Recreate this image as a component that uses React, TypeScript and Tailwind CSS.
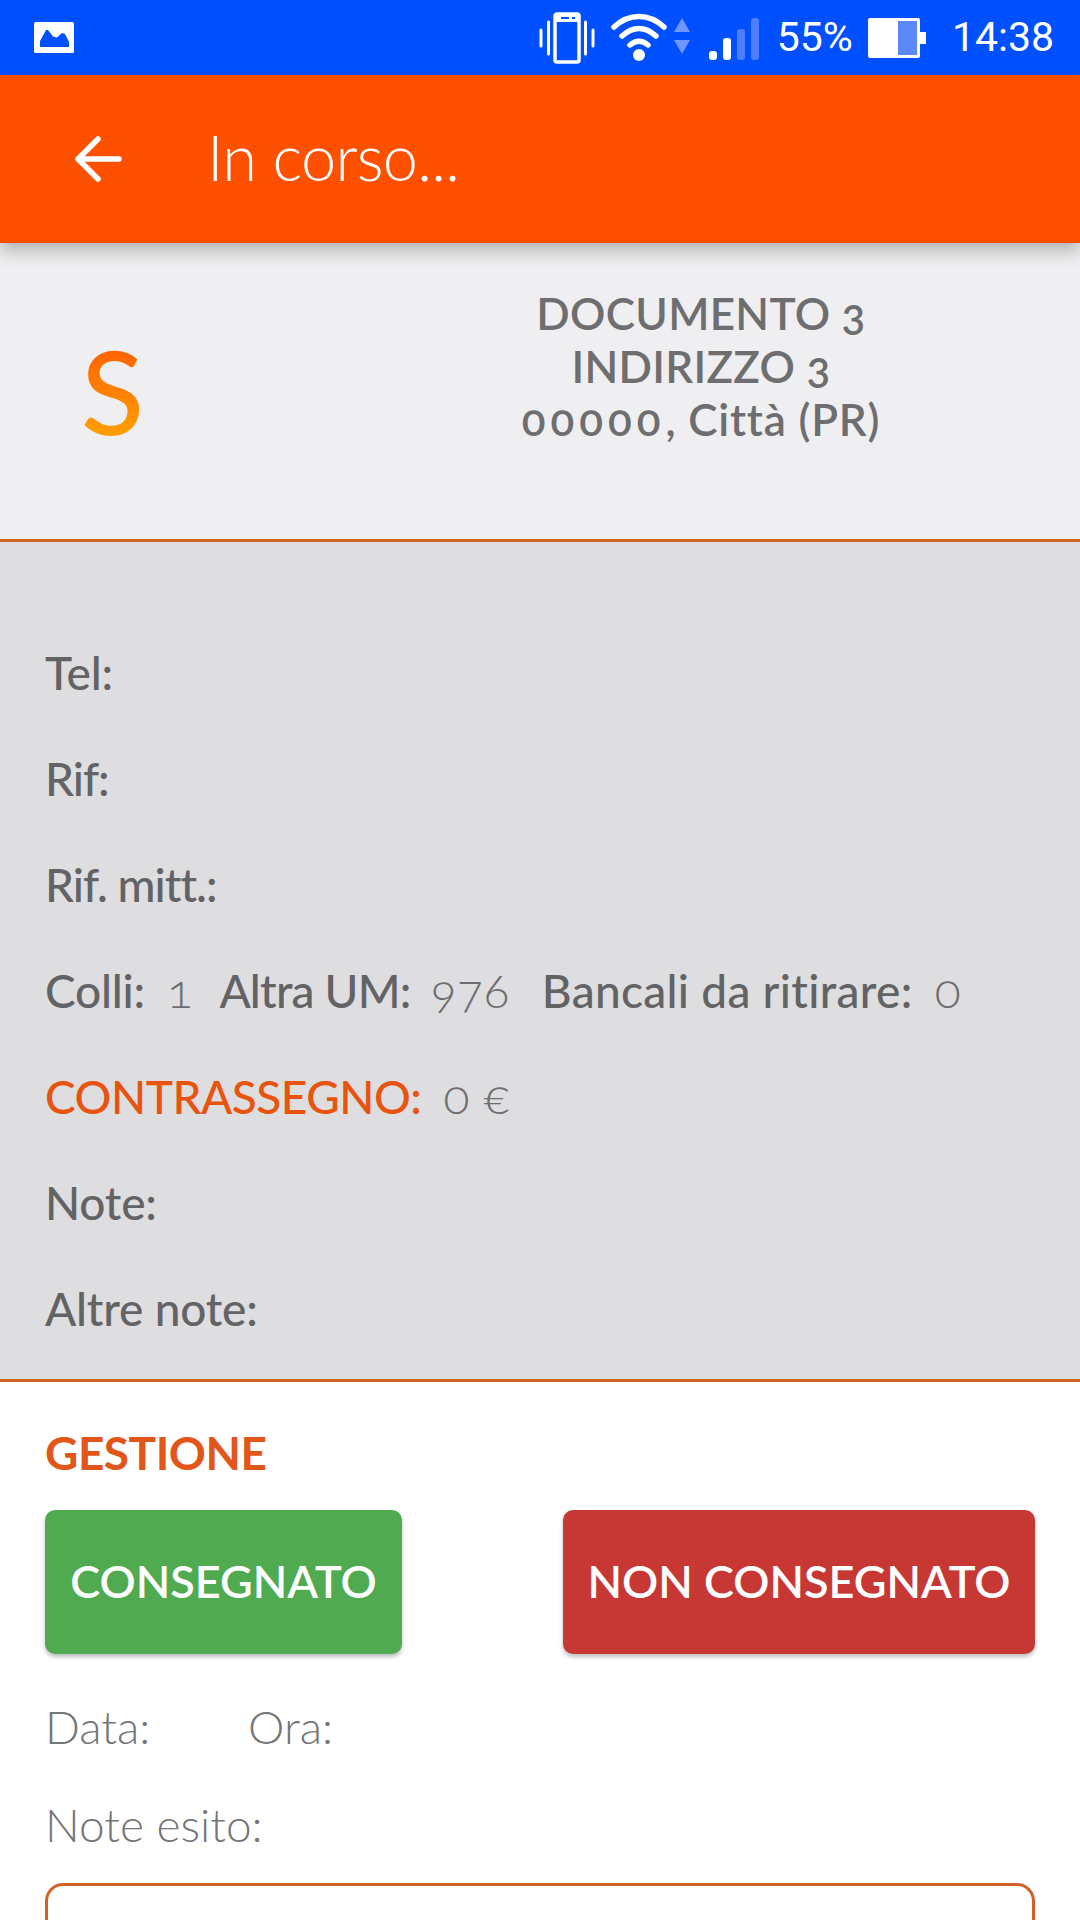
const font = { fontFamily: '"Lato", "Open Sans", sans-serif' };

const VibrateIcon = () => (
  <svg width="56" height="52" viewBox="0 0 56 52" fill="none">
    <rect x="16" y="2" width="24" height="48" rx="2" stroke="#fff" strokeWidth="3.5" />
    <rect x="16" y="2" width="24" height="8" fill="#fff" />
    <rect x="22" y="5" width="8" height="2" fill="#0050ff" />
    <rect x="33" y="5" width="3" height="2" fill="#0050ff" />
    <path d="M9.5 10v32M2 18v16M46.5 10v32M54 18v16" stroke="#fff" strokeWidth="3" strokeLinecap="round" />
  </svg>
);

const WifiIcon = () => (
  <svg width="80" height="52" viewBox="0 0 80 52" fill="none">
    <path d="M3 15C18 1 38 1 53 15M11 24C22 14 34 14 45 24M19 33C25 28 31 28 37 33" stroke="#fff" strokeWidth="5.5" strokeLinecap="round" />
    <circle cx="28" cy="43" r="6" fill="#fff" />
    <path d="M63 20L71 6L79 20ZM63 28L79 28L71 42Z" fill="#6f96ff" />
  </svg>
);

const SignalIcon = () => (
  <svg width="50" height="44" viewBox="0 0 50 44">
    <rect x="0" y="34" width="8" height="9" rx="3" fill="#fff" />
    <rect x="14" y="21" width="8" height="22" rx="3" fill="#fff" />
    <rect x="28" y="12" width="8" height="31" rx="3" fill="#4d7fff" />
    <rect x="42" y="1" width="8" height="42" rx="3" fill="#4d7fff" />
  </svg>
);

const BatteryIcon = () => (
  <svg width="58" height="42" viewBox="0 0 58 42">
    <rect x="0" y="1" width="52" height="40" rx="2" fill="#fff" />
    <rect x="30" y="4" width="19" height="34" fill="#5c87fb" />
    <rect x="52" y="15" width="6" height="12" fill="#fff" />
  </svg>
);

const StatusBar = () => (
  <div className="flex h-[75px] items-center justify-between bg-[#0050ff] pl-[34px] pr-[26px]">
    <svg width="40" height="31" viewBox="0 0 40 31">
      <rect width="40" height="31" rx="1.5" fill="#fff" />
      <path d="M6 25V19L12 8L14 8L19 14.5L23 15.5L28 11L31 12L35 20V25Z" fill="#0050ff" strokeLinejoin="round" />
    </svg>
    <div className="flex items-center">
      <VibrateIcon />
      <div className="ml-[16px]">
        <WifiIcon />
      </div>
      <div className="ml-[18px] mt-[3px]">
        <SignalIcon />
      </div>
      <span className="ml-[18px] text-[41px] text-white" style={{ fontFamily: "Roboto, sans-serif" }}>55%</span>
      <div className="ml-[15px]">
        <BatteryIcon />
      </div>
      <span className="ml-[26px] text-[41px] text-white" style={{ fontFamily: "Roboto, sans-serif" }}>14:38</span>
    </div>
  </div>
);

const AppBar = () => (
  <div className="relative z-10 flex h-[168px] items-center bg-[#ff5000] pb-[4px] pl-[74px] shadow-[0_8px_16px_rgba(0,0,0,0.25)]">
    <svg className="mt-[4px]" width="50" height="46" viewBox="0 0 50 46" fill="none">
      <path d="M24 3L4 23L24 43M4 23H45" stroke="#fff" strokeWidth="5.5" strokeLinecap="round" strokeLinejoin="round" />
    </svg>
    <span className="ml-[83px] text-[63px] font-light tracking-[-0.7px] text-white">In corso...</span>
  </div>
);

const DocHeader = () => (
  <div className="flex h-[299px] border-b-[3px] border-[#d2622a] bg-[#efeff1]">
    <div className="w-[322px] pl-[81px] pt-[91px]">
      <span className="inline-block bg-gradient-to-b from-[#ff5500] to-[#ffa500] bg-clip-text text-[116px] leading-[114px] font-medium text-transparent">S</span>
    </div>
    <div className="flex-1 pt-[44px] text-center text-[44px] leading-[53px] font-semibold tracking-[0.3px] text-[#6e6e70] oldstyle-nums">
      <p>DOCUMENTO 3</p>
      <p>INDIRIZZO 3</p>
      <p className="tracking-[0.8px]">
        <span className="tracking-[5px]">00000</span>, Città (PR)
      </p>
    </div>
  </div>
);

const Value = ({ children }: { children: string }) => (
  <span className="ml-[22px] text-[48px] leading-[30px] font-light tracking-[0.5px] text-[#6e6e70] oldstyle-nums">{children}</span>
);

const InfoPanel = () => (
  <div className="flex h-[840px] flex-col gap-[64px] border-b-[3px] border-[#d2622a] bg-[#dedee0] px-[45px] pt-[110px] text-[46px] leading-[42px] font-medium tracking-[-0.2px] text-[#636365]">
    <p>Tel:</p>
    <p className="tracking-[-1px]">Rif:</p>
    <p className="tracking-[-1px]">Rif. mitt.:</p>
    <p>
      Colli:<Value>1</Value>
      <span className="ml-[26px] tracking-[-0.8px]">Altra UM:</span>
      <span className="ml-[-2px]">
        <Value>976</Value>
      </span>
      <span className="ml-[32px] tracking-[0.3px]">Bancali da ritirare:</span>
      <Value>0</Value>
    </p>
    <p>
      <span className="tracking-[-0.5px] text-[#e8540f]">CONTRASSEGNO:</span>
      <Value>0 €</Value>
    </p>
    <p>Note:</p>
    <p>Altre note:</p>
  </div>
);

const Actions = () => (
  <div className="bg-white px-[45px] pt-[49px]">
    <p className="text-[46px] leading-[44px] font-bold tracking-[-0.5px] text-[#e2561a]">GESTIONE</p>
    <div className="mt-[35px] flex justify-between text-[45px] font-semibold text-white">
      <button className="flex h-[144px] w-[357px] items-center justify-center rounded-[10px] bg-[#4faa50] shadow-[0_3px_4px_rgba(0,0,0,0.25)]">CONSEGNATO</button>
      <button className="flex h-[144px] w-[472px] items-center justify-center rounded-[10px] bg-[#c73835] shadow-[0_3px_4px_rgba(0,0,0,0.25)]">NON CONSEGNATO</button>
    </div>
    <div className="mt-[52px] flex text-[46px] leading-[42px] font-light text-[#757577]">
      <span className="w-[203px]">Data:</span>
      <span>Ora:</span>
    </div>
    <p className="mt-[56px] text-[46px] leading-[42px] font-light text-[#757577]">Note esito:</p>
    <div className="mt-[37px] h-[80px] rounded-t-[18px] border-x-[3px] border-t-[3px] border-[#d2622a]" />
  </div>
);

export default function App() {
  return (
    <div className="h-[1920px] w-[1080px] overflow-hidden bg-white" style={font}>
      <StatusBar />
      <AppBar />
      <DocHeader />
      <InfoPanel />
      <Actions />
    </div>
  );
}
